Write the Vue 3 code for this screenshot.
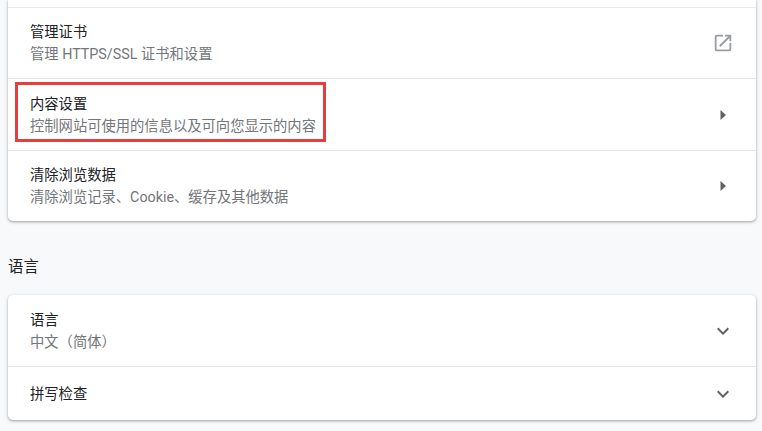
<script setup>
const privacyRows = [
  { title: '管理证书', sub: '管理 HTTPS/SSL 证书和设置', icon: 'external' },
  { title: '内容设置', sub: '控制网站可使用的信息以及可向您显示的内容', icon: 'arrow', marked: true },
  { title: '清除浏览数据', sub: '清除浏览记录、Cookie、缓存及其他数据', icon: 'arrow' }
]

const languageRows = [
  { title: '语言', sub: '中文（简体）', icon: 'expand' },
  { title: '拼写检查', icon: 'expand' }
]
</script>

<template>
  <div class="page">
    <section class="card card-top">
      <div class="stub"></div>
      <div
        v-for="row in privacyRows"
        :key="row.title"
        class="row"
        :class="{ tall: row.marked }"
      >
        <div class="text">
          <div class="title">{{ row.title }}</div>
          <div class="sub">{{ row.sub }}</div>
        </div>
        <svg v-if="row.icon === 'external'" class="icon external" viewBox="0 0 24 24">
          <path d="M19 19H5V5h7V3H5a2 2 0 0 0-2 2v14a2 2 0 0 0 2 2h14a2 2 0 0 0 2-2v-7h-2v7zM14 3v2h3.59l-9.83 9.83 1.41 1.41L19 6.41V10h2V3h-7z" />
        </svg>
        <svg v-else class="icon arrow" viewBox="0 0 24 24">
          <path d="M9.5 7l5.5 5-5.5 5z" />
        </svg>
        <div v-if="row.marked" class="mark"></div>
      </div>
    </section>

    <h2 class="heading">语言</h2>

    <section class="card">
      <div
        v-for="row in languageRows"
        :key="row.title"
        class="row"
        :class="{ short: !row.sub }"
      >
        <div class="text">
          <div class="title">{{ row.title }}</div>
          <div v-if="row.sub" class="sub">{{ row.sub }}</div>
        </div>
        <svg class="icon arrow" viewBox="0 0 24 24">
          <path d="M7.41 8.59L12 13.17l4.59-4.58L18 10l-6 6-6-6z" />
        </svg>
      </div>
    </section>
  </div>
</template>

<style>
body {
  background: #f8f9fa;
}
</style>

<style scoped>
.page {
  height: 431px;
  overflow: hidden;
  box-sizing: border-box;
  padding: 0 6px 0 8px;
  background: #f8f9fa;
  font-family: Roboto, "Noto Sans CJK SC", sans-serif;
  font-size: 14.3px;
}

.card {
  background: #fff;
  border-radius: 5px;
  box-shadow: 0 1px 2px rgba(60, 64, 67, 0.3), 0 1px 3px 1px rgba(60, 64, 67, 0.15);
}

.card-top {
  border-radius: 0 0 5px 5px;
}

.stub {
  height: 7px;
}

.row {
  position: relative;
  display: flex;
  align-items: center;
  justify-content: space-between;
  box-sizing: border-box;
  height: 71px;
  padding: 0 21px 0 22px;
  border-top: 1px solid #e8eaed;
}

.card:not(.card-top) .row:first-child {
  border-top: 0;
}

.row.tall {
  height: 72px;
}

.row.short {
  height: 54px;
}

.title {
  color: #202124;
  line-height: 22px;
}

.sub {
  color: #73767a;
  line-height: 22px;
}

.icon {
  display: block;
  flex: none;
  width: 24px;
  height: 24px;
}

.arrow {
  fill: #5f6368;
}

.external {
  width: 22px;
  height: 22px;
  margin-right: 1px;
  fill: #9a9da1;
}

.mark {
  position: absolute;
  left: 7px;
  top: 3px;
  width: 311px;
  height: 60px;
  box-sizing: border-box;
  border: 3px solid #e53e3e;
}

.heading {
  margin: 0;
  padding-top: 35px;
  height: 74px;
  box-sizing: border-box;
  font-size: 15.4px;
  font-weight: 400;
  line-height: 22px;
  color: #202124;
}
</style>
